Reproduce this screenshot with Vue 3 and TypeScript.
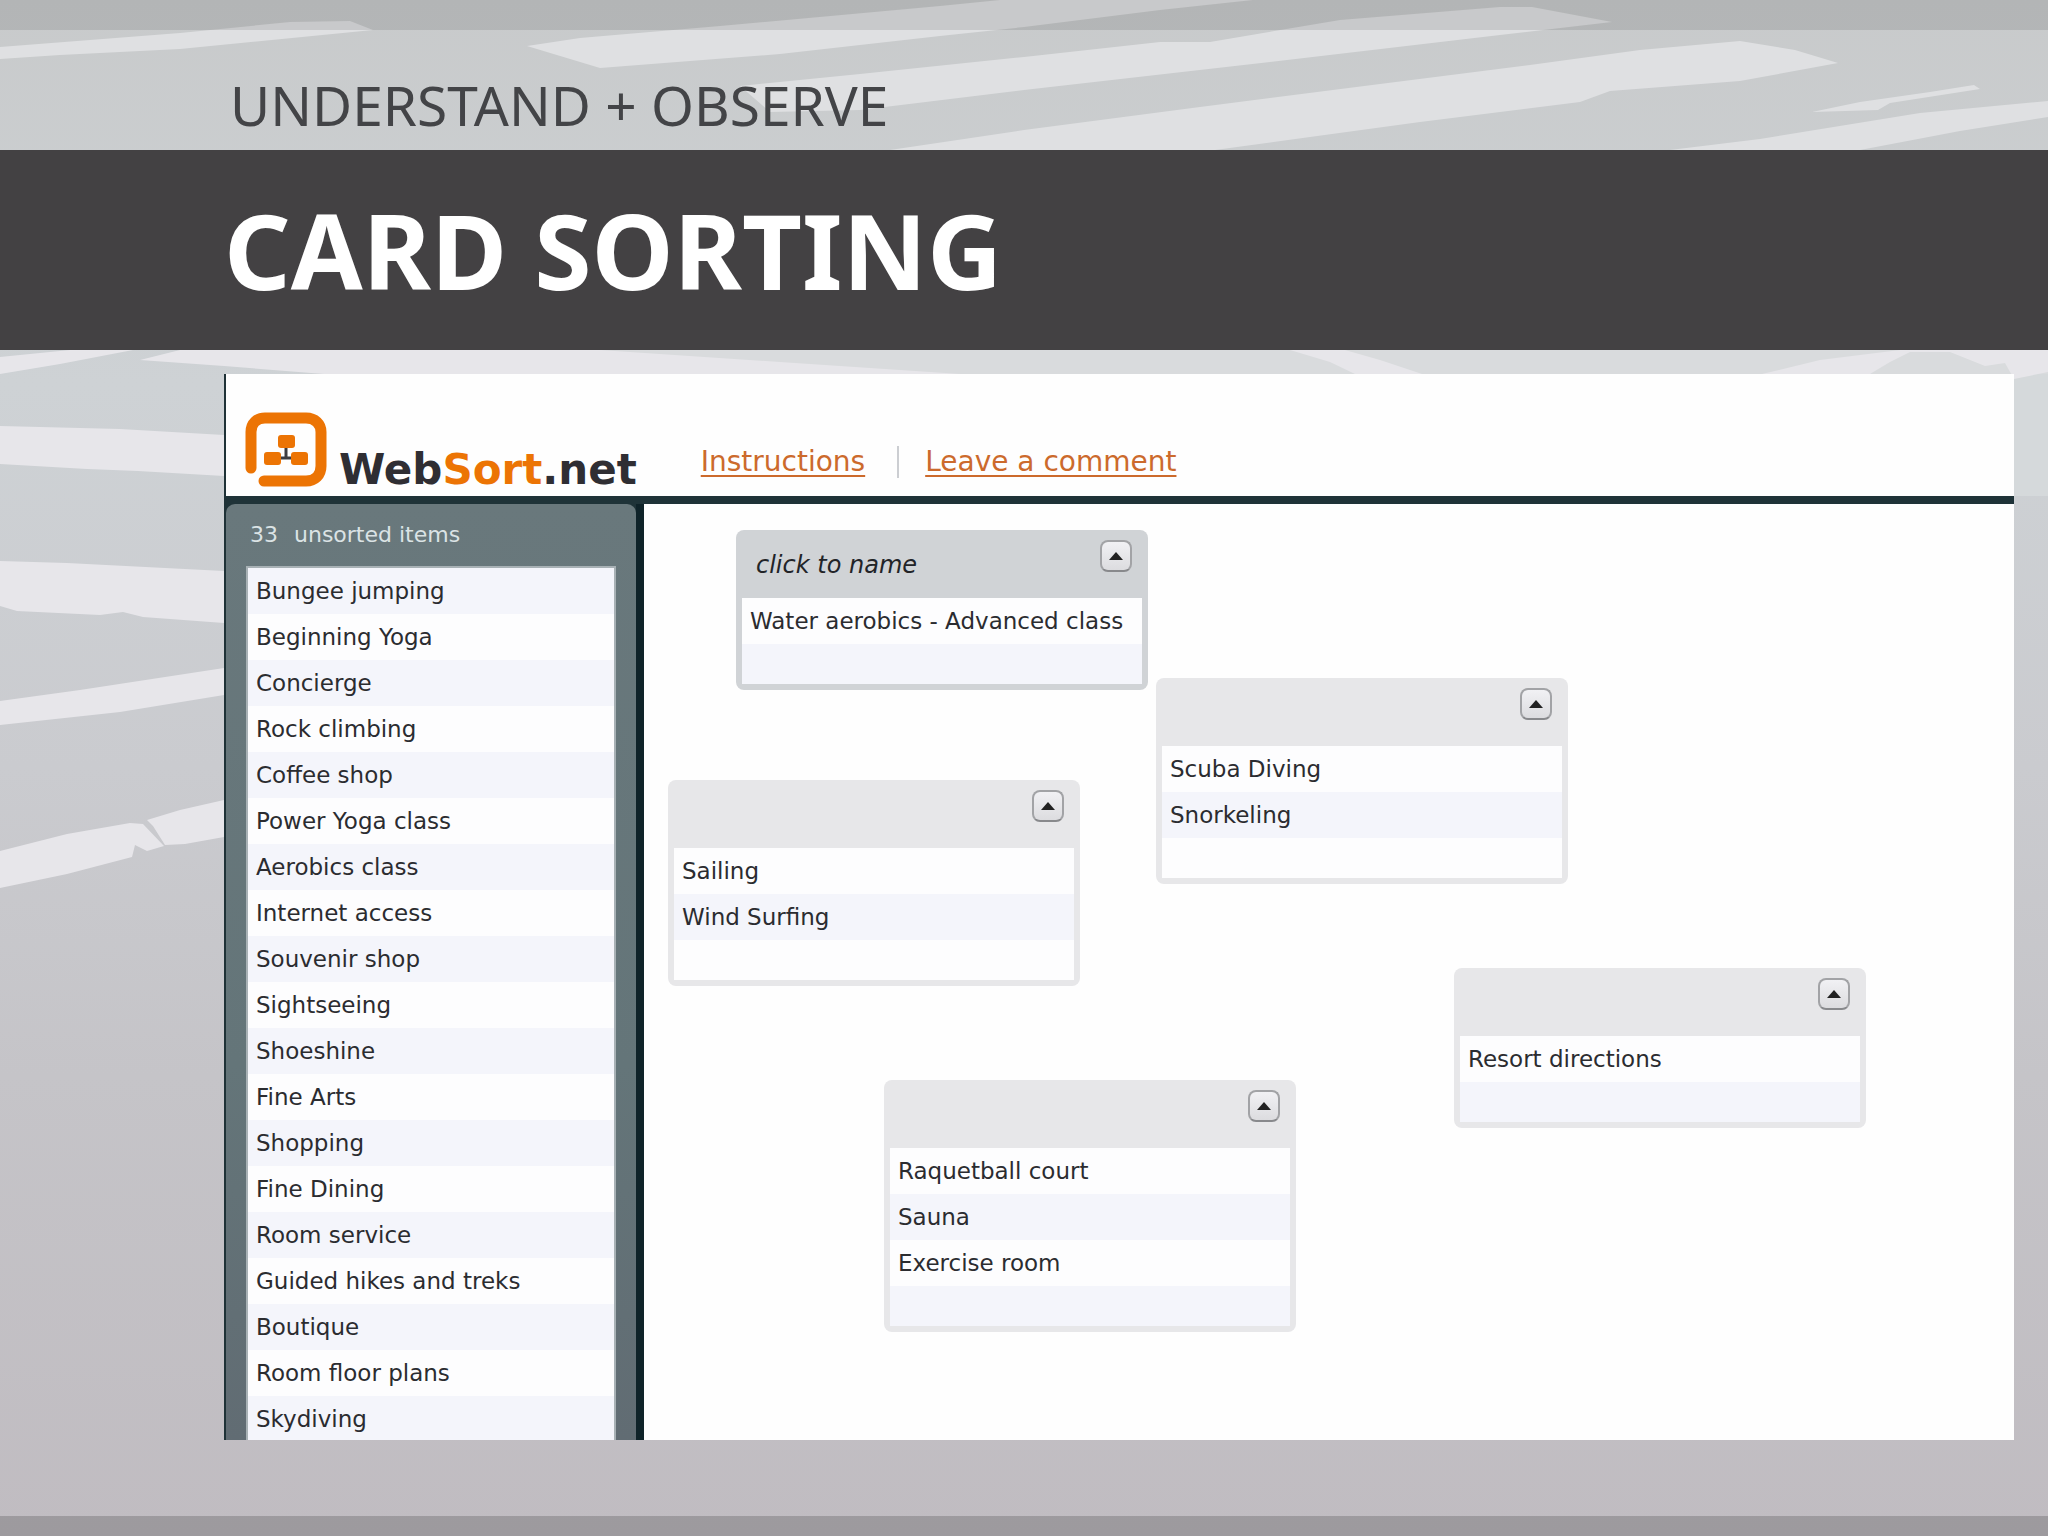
<script setup lang="ts">
interface Group {
  id: number
  name: string
  active: boolean
  left: number
  top: number
  items: string[]
}

const unsortedCount = 33

const unsorted: string[] = [
  'Bungee jumping', 'Beginning Yoga', 'Concierge', 'Rock climbing', 'Coffee shop',
  'Power Yoga class', 'Aerobics class', 'Internet access', 'Souvenir shop', 'Sightseeing',
  'Shoeshine', 'Fine Arts', 'Shopping', 'Fine Dining', 'Room service',
  'Guided hikes and treks', 'Boutique', 'Room floor plans', 'Skydiving',
]

const groups: Group[] = [
  { id: 1, name: 'click to name', active: true, left: 92, top: 26, items: ['Water aerobics - Advanced class'] },
  { id: 2, name: '', active: false, left: 512, top: 174, items: ['Scuba Diving', 'Snorkeling'] },
  { id: 3, name: '', active: false, left: 24, top: 276, items: ['Sailing', 'Wind Surfing'] },
  { id: 4, name: '', active: false, left: 810, top: 464, items: ['Resort directions'] },
  { id: 5, name: '', active: false, left: 240, top: 576, items: ['Raquetball court', 'Sauna', 'Exercise room'] },
]
</script>

<template>
  <div class="slide">
    <svg class="backdrop" viewBox="0 0 2048 1536" preserveAspectRatio="none" aria-hidden="true">
      <defs>
        <linearGradient id="road" x1="0" y1="0" x2="0" y2="1">
          <stop offset="0" stop-color="#c8cacb" />
          <stop offset="0.25" stop-color="#ced2d5" />
          <stop offset="0.5" stop-color="#cacbcf" />
          <stop offset="0.7" stop-color="#c5c4c8" />
          <stop offset="1" stop-color="#c0bcc1" />
        </linearGradient>
      </defs>
      <rect width="2048" height="1536" fill="url(#road)" />
      <g fill="#dfe0e2">
        <path d="M0 47 L180 33 L290 22 L350 21 L373 30 L180 49 L60 55 L0 59Z" />
        <path d="M527 46 L580 38 L720 26 L940 6 L1040 -4 L1290 -4 L1160 10 L1024 27 L940 36 L780 54 L600 68Z" />
        <path d="M740 86 L860 74 L1024 57 L1160 42 L1210 42 L1340 20 L1500 7 L1532 7 L1612 22 L1500 35 L1270 62 L1024 90 L860 110 L770 112Z" />
        <path d="M890 150 L1024 130 L1200 107 L1380 84 L1530 65 L1640 50 L1740 41 L1795 50 L1838 63 L1740 81 L1610 91 L1580 102 L1420 122 L1310 137 L1215 150Z" />
        <path d="M1812 112 L1860 102 L1930 92 L1974 85 L1980 89 L1890 103 L1878 110Z" />
        <path d="M1670 150 L1760 139 L1920 113 L2048 101 L2048 117 L1960 131 L1860 150Z" />
      </g>
      <rect x="2014" y="372" width="34" height="124" fill="#d5d9db" />
      <rect x="600" y="350" width="1448" height="24" fill="#d9dbdd" />
      <g fill="#e7e6ea">
        <path d="M0 357 L70 350 L133 350 L60 364 L0 374Z" />
        <path d="M140 360 L180 350 L600 350 L780 362 L960 374 L400 380 L224 366Z" />
        <path d="M1290 350 L1345 350 L1380 360 L1422 374 L1355 374 L1330 362Z" />
        <path d="M1762 374 L1820 360 L1900 350 L2048 350 L2048 372 L2014 379 L2005 363 L1985 366 L1950 352 L1910 352 L1890 362 L1870 374Z" />
        <path d="M0 426 L120 429 L224 435 L224 476 L138 471 L87 469 L0 464Z" />
        <path d="M0 561 L67 563 L224 571 L224 623 L143 617 L123 612 L100 615 L17 611 L0 606Z" />
        <path d="M0 701 L80 690 L224 668 L224 695 L120 712 L0 725Z" />
        <path d="M0 851 L67 834 L130 823 L143 824 L164 846 L147 851 L135 845 L132 857 L67 874 L0 888Z" />
        <path d="M147 820 L180 810 L224 800 L224 837 L185 844 L165 845 L153 826Z" />
      </g>
      <rect width="2048" height="30" fill="#000" opacity="0.1" />
      <rect y="1516" width="2048" height="20" fill="#000" opacity="0.18" />
    </svg>

    <div class="content">
      <header class="heading">
        <p class="kicker">UNDERSTAND + OBSERVE</p>
        <h1 class="title">CARD SORTING</h1>
      </header>

      <main class="app">
        <div class="topbar">
          <div class="brand">
            <svg class="logo" viewBox="0 0 82 76" aria-hidden="true">
              <path d="M6 56V20C6 11 12 6 20 6H61C70 6 76 12 76 20V54C76 63 70 69 61 69H19" fill="none" stroke="#ec7404" stroke-width="11" stroke-linecap="round" />
              <path d="M41 34V46M30 46H52" stroke="#3c3c40" stroke-width="3" />
              <rect x="33" y="23" width="17" height="13" rx="3" fill="#ec7404" />
              <rect x="19" y="40" width="17" height="13" rx="3" fill="#ec7404" />
              <rect x="46" y="40" width="17" height="13" rx="3" fill="#ec7404" />
            </svg>
            <span class="wordmark">Web<span class="accent">Sort</span>.net</span>
          </div>
          <nav class="links">
            <a href="#instructions">Instructions</a>
            <a href="#comment">Leave a comment</a>
          </nav>
        </div>

        <div class="workspace">
          <aside class="sidebar">
            <div class="tray">
              <h2 class="count"><span>{{ unsortedCount }}</span><span>unsorted items</span></h2>
              <ul class="rows unsorted">
                <li v-for="item in unsorted" :key="item">{{ item }}</li>
              </ul>
            </div>
          </aside>

          <section class="canvas">
            <article
              v-for="group in groups"
              :key="group.id"
              class="group"
              :class="{ active: group.active }"
              :style="{ left: group.left + 'px', top: group.top + 'px' }"
            >
              <div class="group-head">
                <span class="group-name">{{ group.name }}</span>
                <button class="collapse" type="button" aria-label="Collapse group">
                  <svg viewBox="0 0 14 8" aria-hidden="true"><path d="M0 8L7 0L14 8Z" /></svg>
                </button>
              </div>
              <ul class="rows sorted">
                <li v-for="item in group.items" :key="item">{{ item }}</li>
                <li class="drop"></li>
              </ul>
            </article>
          </section>
        </div>
      </main>
    </div>
  </div>
</template>

<style>
body {
  margin: 0;
}
</style>

<style scoped>
.slide {
  display: grid;
  grid-template-rows: minmax(0, 1fr);
  height: 100vh;
  overflow: hidden;
  font-family: "DejaVu Sans", Verdana, sans-serif;
}

.backdrop,
.content {
  grid-area: 1 / 1;
  min-width: 0;
}

.backdrop {
  width: 100%;
  height: 100%;
}

.content {
  z-index: 1;
  box-sizing: border-box;
  display: flex;
  flex-direction: column;
  min-height: 0;
  padding-bottom: 96px;
}

.heading {
  flex: none;
}

.kicker,
.title {
  margin: 0;
  font-family: "Noto Sans", "Open Sans", sans-serif;
}

.kicker {
  padding: 60px 0 0 230px;
  font-size: 55px;
  line-height: 90px;
  color: #434447;
}

.title {
  padding-left: 224px;
  background: #434143;
  font-size: 104px;
  font-weight: 700;
  line-height: 200px;
  color: #fff;
}

.app {
  flex: 1;
  display: flex;
  flex-direction: column;
  min-height: 0;
  overflow: hidden;
  margin: 24px 34px 0 224px;
  border-left: 2px solid #1f3237;
  background: #fefefe;
}

.topbar {
  flex: none;
  display: flex;
  align-items: flex-end;
  gap: 64px;
  height: 122px;
  border-bottom: 8px solid #1f3338;
}

.brand {
  display: flex;
  align-items: flex-end;
  gap: 12px;
  padding: 0 0 8px 19px;
}

.logo {
  width: 82px;
  height: 76px;
}

.wordmark {
  font-size: 42px;
  font-weight: 700;
  line-height: 36px;
  color: #2f2e33;
}

.accent {
  color: #ec7404;
}

.links {
  display: flex;
  padding-bottom: 18px;
  font-size: 28px;
  line-height: 32px;
}

.links a {
  color: #cc6a2c;
  text-decoration: underline;
  text-decoration-thickness: 2px;
  text-underline-offset: 4px;
}

.links a + a {
  margin-left: 32px;
  padding-left: 26px;
  border-left: 2px solid #ccced2;
}

.workspace {
  flex: 1;
  display: flex;
  min-height: 0;
}

.sidebar {
  flex: none;
  width: 410px;
  border-right: 8px solid #0f2329;
  background: #1f3338;
}

.tray {
  height: 100%;
  box-sizing: border-box;
  padding: 0 20px;
  border-radius: 9px 9px 0 0;
  background: linear-gradient(#69787c, #647579 60%, #616c73);
}

.count {
  display: flex;
  gap: 16px;
  margin: 0;
  padding-left: 4px;
  font-size: 22px;
  font-weight: 400;
  line-height: 62px;
  color: #dbe3e5;
}

.rows {
  margin: 0;
  padding: 0;
  list-style: none;
  font-size: 23px;
  line-height: 46px;
  color: #2b2c30;
  background: #fdfdfe;
}

.rows li {
  height: 46px;
  padding-left: 8px;
  white-space: nowrap;
}

.unsorted {
  border: solid #a8b1b5;
  border-width: 2px 2px 0;
}

.unsorted li:nth-child(odd),
.sorted li:nth-child(even) {
  background: #f4f5fb;
}

.canvas {
  position: relative;
  flex: 1;
}

.group {
  position: absolute;
  box-sizing: border-box;
  width: 412px;
  padding: 0 6px 6px;
  border-radius: 8px;
  background: #e7e7e9;
}

.group.active {
  background: #d0d3d6;
}

.group-head {
  display: flex;
  align-items: flex-start;
  justify-content: space-between;
  height: 68px;
}

.group-name {
  padding-left: 14px;
  font-size: 24px;
  font-style: italic;
  line-height: 70px;
  color: #222428;
}

.collapse {
  display: grid;
  place-items: center;
  width: 32px;
  height: 32px;
  margin: 10px 10px 0 0;
  padding: 0;
  border: 2px solid #a2a3a6;
  border-bottom-color: #88898c;
  border-radius: 8px;
  background: linear-gradient(#f1f1f4, #dcdcdf);
}

.collapse svg {
  width: 14px;
  height: 8px;
  fill: #222;
}

.sorted .drop {
  height: 40px;
}
</style>
